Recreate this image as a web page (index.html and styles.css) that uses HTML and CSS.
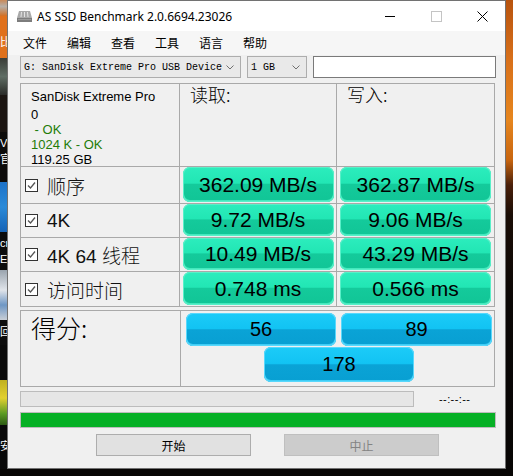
FILE: index.html
```html
<!DOCTYPE html>
<html lang="zh-CN">
<head>
<meta charset="utf-8">
<title>AS SSD Benchmark</title>
<link rel="stylesheet" href="styles.css">
</head>
<body>
<div class="screen">
  <div class="desk desk-left">
    <div class="dl dl-1"></div>
    <div class="dl dl-2"><span class="dt">比</span></div>
    <div class="dl dl-3"></div>
    <div class="dl dl-4"></div>
    <div class="dl dl-5"><span class="dt">Vi</span><span class="dt">官</span></div>
    <div class="dl dl-6"></div>
    <div class="dl dl-7"><span class="dt">cr</span><span class="dt">Ec</span></div>
    <div class="dl dl-8"></div>
    <div class="dl dl-9"><span class="dt">回</span></div>
    <div class="dl dl-10"></div>
    <div class="dl dl-11"></div>
    <div class="dl dl-12"><span class="dt">安</span></div>
  </div>
  <div class="window">
    <div class="titlebar">
      <svg class="app-icon" viewBox="0 0 17 13" width="17" height="13">
        <polygon points="3,1 14,1 16,8 1,8" fill="#a9a9a9"/>
        <g stroke="#e4e4e4" stroke-width="1">
          <line x1="5.5" y1="2" x2="5" y2="7"/>
          <line x1="8.5" y1="2" x2="8.5" y2="7"/>
          <line x1="11.5" y1="2" x2="12" y2="7"/>
        </g>
        <rect x="1" y="8" width="15" height="4" fill="#7d7d7d"/>
        <rect x="2" y="9" width="13" height="1" fill="#9a9a9a"/>
      </svg>
      <span class="title">AS SSD Benchmark 2.0.6694.23026</span>
      <div class="caption-btns">
        <span class="cap"><svg width="10" height="10" viewBox="0 0 10 10"><line x1="0" y1="5.5" x2="10" y2="5.5" stroke="#000" stroke-width="1"/></svg></span>
        <span class="cap"><svg width="11" height="11" viewBox="0 0 11 11"><rect x="0.5" y="0.5" width="10" height="10" fill="none" stroke="#c4c4c4" stroke-width="1"/></svg></span>
        <span class="cap"><svg width="11" height="11" viewBox="0 0 11 11"><path d="M0.5 0.5 L10.5 10.5 M10.5 0.5 L0.5 10.5" stroke="#000" stroke-width="1"/></svg></span>
      </div>
    </div>
    <div class="menubar">
      <span class="menu">文件</span>
      <span class="menu">编辑</span>
      <span class="menu">查看</span>
      <span class="menu">工具</span>
      <span class="menu">语言</span>
      <span class="menu">帮助</span>
    </div>
    <div class="content">
      <div class="toolbar">
        <div class="combo combo-drive"><span class="combo-text">G: SanDisk Extreme Pro USB Device</span><svg class="chev" width="8" height="5" viewBox="0 0 8 5"><path d="M0.5 0.5 L4 4 L7.5 0.5" fill="none" stroke="#707070" stroke-width="1"/></svg></div>
        <div class="combo combo-size"><span class="combo-text">1 GB</span><svg class="chev" width="8" height="5" viewBox="0 0 8 5"><path d="M0.5 0.5 L4 4 L7.5 0.5" fill="none" stroke="#707070" stroke-width="1"/></svg></div>
        <div class="textbox"></div>
      </div>

      <div class="results">
        <div class="cell info">
          <div class="info-name">SanDisk Extreme Pro</div>
          <div class="info-line">0</div>
          <div class="info-line ok"> - OK</div>
          <div class="info-line ok">1024 K - OK</div>
          <div class="info-line">119.25 GB</div>
        </div>
        <div class="cell head">读取:</div>
        <div class="cell head">写入:</div>

        <div class="cell label"><span class="check"><svg width="11" height="11" viewBox="0 0 11 11"><path d="M2 5.5 L4.5 8 L9 2.5" fill="none" stroke="#555" stroke-width="1.3"/></svg></span><span class="lbl">顺序</span></div>
        <div class="cell vcell"><div class="val">362.09 MB/s</div></div>
        <div class="cell vcell"><div class="val">362.87 MB/s</div></div>

        <div class="cell label"><span class="check"><svg width="11" height="11" viewBox="0 0 11 11"><path d="M2 5.5 L4.5 8 L9 2.5" fill="none" stroke="#555" stroke-width="1.3"/></svg></span><span class="lbl">4K</span></div>
        <div class="cell vcell"><div class="val">9.72 MB/s</div></div>
        <div class="cell vcell"><div class="val">9.06 MB/s</div></div>

        <div class="cell label"><span class="check"><svg width="11" height="11" viewBox="0 0 11 11"><path d="M2 5.5 L4.5 8 L9 2.5" fill="none" stroke="#555" stroke-width="1.3"/></svg></span><span class="lbl">4K 64 线程</span></div>
        <div class="cell vcell"><div class="val">10.49 MB/s</div></div>
        <div class="cell vcell"><div class="val">43.29 MB/s</div></div>

        <div class="cell label"><span class="check"><svg width="11" height="11" viewBox="0 0 11 11"><path d="M2 5.5 L4.5 8 L9 2.5" fill="none" stroke="#555" stroke-width="1.3"/></svg></span><span class="lbl">访问时间</span></div>
        <div class="cell vcell"><div class="val">0.748 ms</div></div>
        <div class="cell vcell"><div class="val">0.566 ms</div></div>
      </div>

      <div class="score">
        <div class="cell score-label">得分:</div>
        <div class="cell score-vals">
          <div class="sval">56</div>
          <div class="sval">89</div>
          <div class="sval total">178</div>
        </div>
      </div>

      <div class="progress-row">
        <div class="progress"></div>
        <span class="time">--:--:--</span>
      </div>
      <div class="bar-green"></div>
      <div class="actions">
        <button class="btn">开始</button>
        <button class="btn btn-disabled" disabled>中止</button>
      </div>
    </div>
  </div>
  <div class="desk desk-right"></div>
</div>
</body>
</html>
```

FILE: styles.css
```css
* { box-sizing: border-box; }
html, body { margin: 0; padding: 0; }
body {
  width: 513px;
  height: 476px;
  overflow: hidden;
  background: #070504;
  font-family: "Liberation Sans", "Noto Sans CJK SC", sans-serif;
}
.screen { display: flex; height: 469px; }

/* desktop strips */
.desk { width: 7px; flex: none; overflow: hidden; }
.desk-left { display: flex; flex-direction: column; }
.dl { flex: none; overflow: hidden; width: 7px; }
.dt {
  display: block;
  height: 16px;
  color: #fff;
  font: 11px/16px "Liberation Sans", "Noto Sans CJK SC", sans-serif;
  white-space: nowrap;
}
.dl-1 { height: 16px; background: linear-gradient(to bottom, #c98a5a, #b8b0a8 40%, #d27024); }
.dl-2 { height: 42px; background: #e0711c; padding-top: 18px; }
.dl-3 { height: 37px; background: linear-gradient(to bottom, #3a3d38, #5f6d64 50%, #2a2b28); }
.dl-4 { height: 37px; background: #1b1511; }
.dl-5 { height: 50px; background: #0d0c0b; padding-top: 3px; }
.dl-6 { height: 50px; background: linear-gradient(to bottom, #1d72c8, #2a8ad8 50%, #1663b6); }
.dl-7 { height: 38px; background: #0c0c0c; padding-top: 3px; }
.dl-8 { height: 50px; background: linear-gradient(to bottom, #9aa4ae, #e0e4ea 40%, #6f97c4 70%, #c8ced6); }
.dl-9 { height: 25px; background: #0d0d0d; padding-top: 4px; }
.dl-10 { height: 35px; background: #0a0a0a; }
.dl-11 { height: 45px; background: linear-gradient(to bottom, #c0b020, #e2d030 40%, #5a9a24 75%, #2d5a14); }
.dl-12 { height: 44px; background: #090909; padding-top: 13px; }
.desk-right {
  background: linear-gradient(to bottom, #b8530e 0, #d8701a 60px, #e6861e 120px, #c8650f 160px, #4a200a 185px, #1a0d06 215px, #0b0705 300px, #070504 469px);
}

/* window */
.window {
  width: 499px;
  height: 469px;
  flex: none;
  border: 1px solid #727272;
  background: #f0f0f0;
  display: flex;
  flex-direction: column;
}
.titlebar {
  height: 30px;
  flex: none;
  background: #ffffff;
  display: flex;
  align-items: center;
}
.app-icon { margin-left: 8px; flex: none; }
.title {
  margin-left: 4px;
  font: 12px "Noto Sans", sans-serif;
  color: #000;
}
.caption-btns { margin-left: auto; display: flex; height: 100%; }
.cap { width: 46px; display: flex; align-items: center; justify-content: center; }

.menubar {
  height: 24px;
  flex: none;
  background: #f6f6f6;
  display: flex;
  align-items: center;
  padding-left: 15px;
  gap: 20px;
}
.menu {
  font: 12px/24px "Noto Sans CJK SC", sans-serif;
  color: #000;
}

.content { padding-left: 12px; display: flex; flex-direction: column; }

.toolbar { display: flex; height: 22px; margin-top: 1px; }
.combo {
  height: 22px;
  border: 1px solid #adadad;
  background: #e9e9e9;
  display: flex;
  align-items: center;
  padding-left: 3px;
}
.combo-drive { width: 221px; }
.combo-size { width: 60px; margin-left: 6px; }
.combo-text {
  font: 10px "Liberation Mono", monospace;
  color: #000;
  white-space: pre;
}
.chev { margin-left: auto; margin-right: 6px; }
.textbox {
  width: 183px;
  height: 22px;
  margin-left: 6px;
  border: 1px solid #7a7a7a;
  background: #fff;
}

/* results grid */
.results {
  margin-top: 5px;
  width: 475px;
  display: grid;
  grid-template-columns: 158px 156px 157px;
  grid-template-rows: 82px 36px 33px 33px 34px;
  gap: 1px;
  padding: 1px;
  background: #a9a9a9;
}
.cell { background: #f0f0f0; }
.info { padding: 5px 0 0 10px; font: 13px/15px "Liberation Sans", sans-serif; color: #000; }
.info-name { margin-bottom: 3px; }
.info-line { white-space: pre; }
.ok { color: #237c08; }
.head {
  padding: 0 0 0 10px;
  font: 300 18px/21px "Noto Sans CJK SC", sans-serif;
  color: #000;
}
.label { display: flex; align-items: center; padding-left: 4px; }
.check {
  width: 13px;
  height: 13px;
  border: 1px solid #333;
  background: #fff;
  flex: none;
}
.check svg { display: block; }
.lbl {
  margin-left: 9px;
  font: 300 19px "Liberation Sans", "Noto Sans CJK SC", sans-serif;
  color: #111;
  white-space: pre;
}
.vcell { display: flex; justify-content: center; align-items: stretch; padding-bottom: 1px; }
.val {
  width: 151px;
  border-radius: 7px;
  display: flex;
  align-items: center;
  justify-content: center;
  font: 21px "Liberation Sans", sans-serif;
  color: #000;
  background: linear-gradient(to bottom, #2cedbd 0%, #22e6b4 46%, #14ca9b 50%, #11c596 100%);
  box-shadow: inset 0 0 0 1px #58f0c8, inset 0 -1px 0 1px #44e8bd;
}

/* score */
.score {
  margin-top: 3px;
  width: 475px;
  height: 77px;
  display: grid;
  grid-template-columns: 159px 313px;
  gap: 1px;
  padding: 1px;
  background: #a9a9a9;
}
.score-label {
  padding: 0 0 0 10px;
  font: 300 25px/32px "Noto Sans CJK SC", sans-serif;
  color: #000;
}
.score-vals {
  display: grid;
  grid-template-columns: 150px 151px;
  grid-template-rows: 33px 35px;
  column-gap: 5px;
  row-gap: 1px;
  padding: 2px 0 0 5px;
}
.sval {
  border-radius: 7px;
  display: flex;
  align-items: center;
  justify-content: center;
  font: 20px "Liberation Sans", sans-serif;
  color: #000;
  background: linear-gradient(to bottom, #1ccbf8 0%, #12c3f3 47%, #0aa3d6 51%, #089fd2 100%);
  box-shadow: inset 0 0 0 1px #58d8fc, inset 0 -1px 0 1px #3fcdf5;
}
.total { grid-column: 1 / 3; width: 150px; justify-self: center; }

/* progress */
.progress-row { display: flex; align-items: center; margin-top: 4px; height: 16px; }
.progress {
  width: 394px;
  height: 16px;
  background: #e6e6e6;
  border: 1px solid #bcbcbc;
}
.time {
  margin-left: 25px;
  font: 11px "Liberation Sans", sans-serif;
  letter-spacing: 0.4px;
  color: #000;
}
.bar-green {
  margin-top: 5px;
  width: 476px;
  height: 16px;
  background: #06b025;
  border: 1px solid #bcbcbc;
}
.actions { display: flex; margin-top: 6px; }
.btn {
  width: 155px;
  height: 22px;
  margin: 0;
  padding: 0;
  border: 1px solid #adadad;
  background: #e1e1e1;
  font: 12px "Noto Sans CJK SC", sans-serif;
  color: #000;
}
.btn:first-child { margin-left: 76px; }
.btn-disabled {
  margin-left: 33px;
  background: #cccccc;
  border-color: #bfbfbf;
  color: #838383;
}
```
